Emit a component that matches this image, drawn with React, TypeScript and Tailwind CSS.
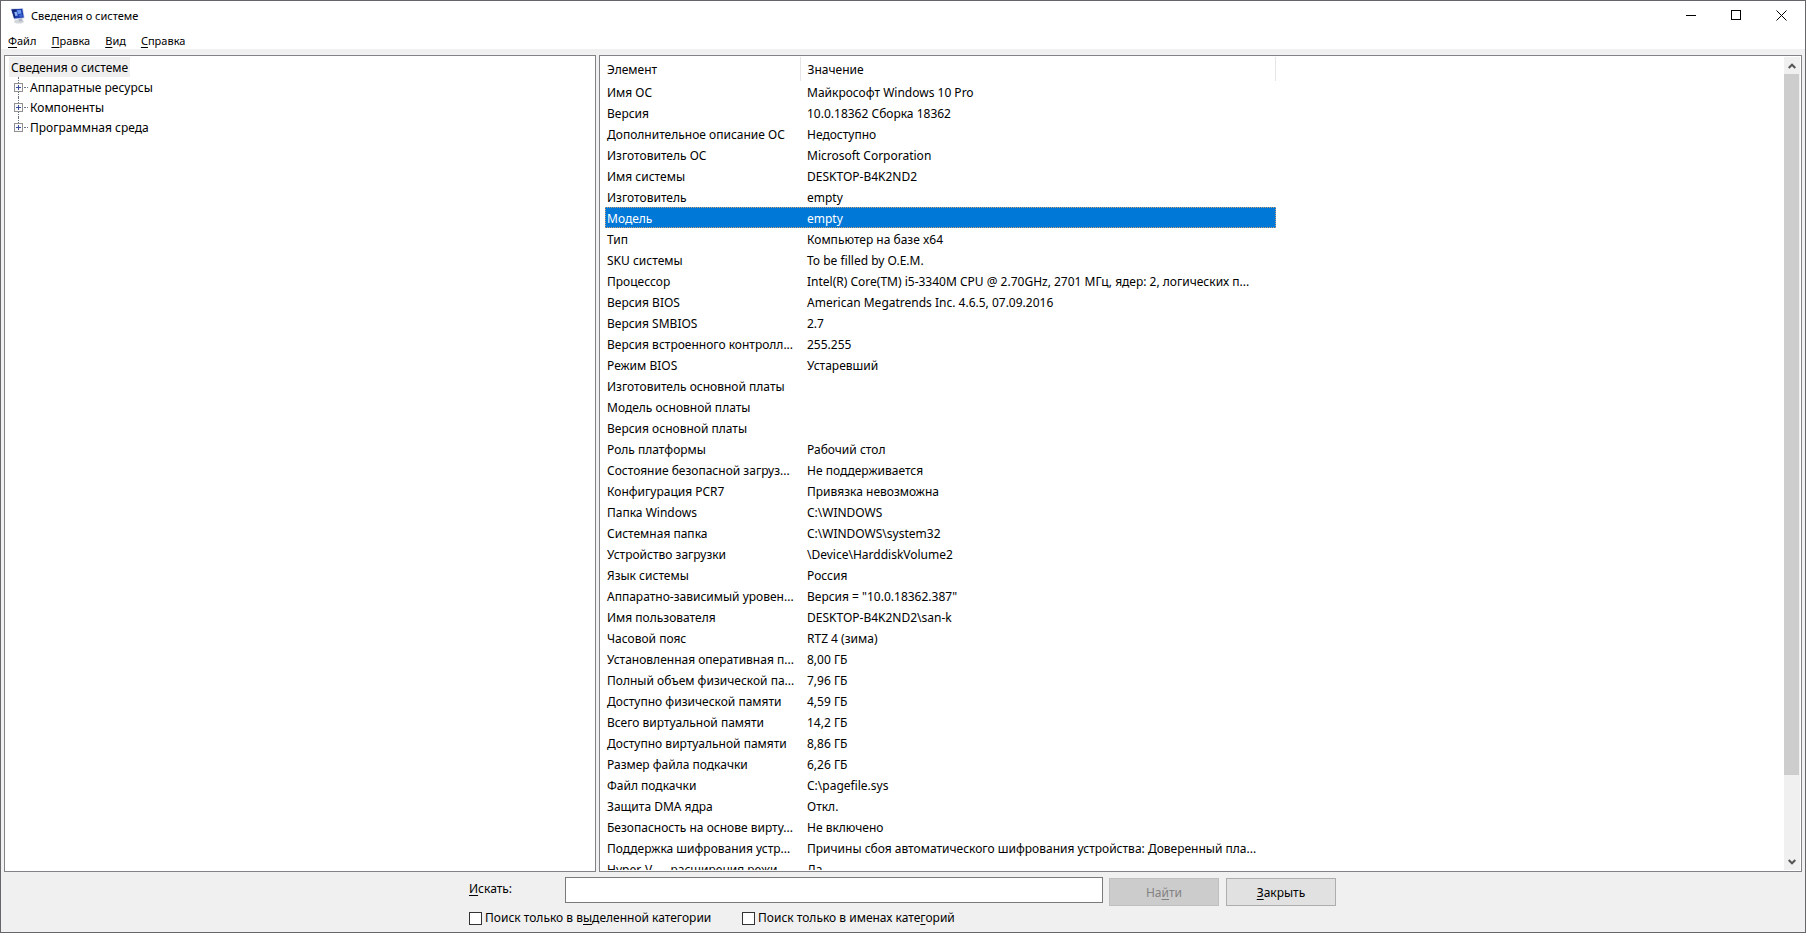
import { ReactNode } from "react";

type TRow = {
  name: string;
  value: string;
};

const menuItems = [
  { hot: "Ф", rest: "айл" },
  { hot: "П", rest: "равка" },
  { hot: "В", rest: "ид" },
  { hot: "С", rest: "правка" },
];

const treeItems = ["Аппаратные ресурсы", "Компоненты", "Программная среда"];

const rows: TRow[] = [
  { name: "Имя ОС", value: "Майкрософт Windows 10 Pro" },
  { name: "Версия", value: "10.0.18362 Сборка 18362" },
  { name: "Дополнительное описание ОС", value: "Недоступно" },
  { name: "Изготовитель ОС", value: "Microsoft Corporation" },
  { name: "Имя системы", value: "DESKTOP-B4K2ND2" },
  { name: "Изготовитель", value: "empty" },
  { name: "Модель", value: "empty" },
  { name: "Тип", value: "Компьютер на базе x64" },
  { name: "SKU системы", value: "To be filled by O.E.M." },
  {
    name: "Процессор",
    value:
      "Intel(R) Core(TM) i5-3340M CPU @ 2.70GHz, 2701 МГц, ядер: 2, логических п...",
  },
  { name: "Версия BIOS", value: "American Megatrends Inc. 4.6.5, 07.09.2016" },
  { name: "Версия SMBIOS", value: "2.7" },
  { name: "Версия встроенного контролл...", value: "255.255" },
  { name: "Режим BIOS", value: "Устаревший" },
  { name: "Изготовитель основной платы", value: "" },
  { name: "Модель основной платы", value: "" },
  { name: "Версия основной платы", value: "" },
  { name: "Роль платформы", value: "Рабочий стол" },
  { name: "Состояние безопасной загруз...", value: "Не поддерживается" },
  { name: "Конфигурация PCR7", value: "Привязка невозможна" },
  { name: "Папка Windows", value: "C:\\WINDOWS" },
  { name: "Системная папка", value: "C:\\WINDOWS\\system32" },
  { name: "Устройство загрузки", value: "\\Device\\HarddiskVolume2" },
  { name: "Язык системы", value: "Россия" },
  { name: "Аппаратно-зависимый уровен...", value: 'Версия = "10.0.18362.387"' },
  { name: "Имя пользователя", value: "DESKTOP-B4K2ND2\\san-k" },
  { name: "Часовой пояс", value: "RTZ 4 (зима)" },
  { name: "Установленная оперативная п...", value: "8,00 ГБ" },
  { name: "Полный объем физической па...", value: "7,96 ГБ" },
  { name: "Доступно физической памяти", value: "4,59 ГБ" },
  { name: "Всего виртуальной памяти", value: "14,2 ГБ" },
  { name: "Доступно виртуальной памяти", value: "8,86 ГБ" },
  { name: "Размер файла подкачки", value: "6,26 ГБ" },
  { name: "Файл подкачки", value: "C:\\pagefile.sys" },
  { name: "Защита DMA ядра", value: "Откл." },
  { name: "Безопасность на основе вирту...", value: "Не включено" },
  {
    name: "Поддержка шифрования устр...",
    value:
      "Причины сбоя автоматического шифрования устройства: Доверенный пла...",
  },
  { name: "Hyper-V — расширения режи...", value: "Да" },
];

const selectedRow = 6;

const AppIcon = () => (
  <svg width="16" height="16" viewBox="0 0 16 16" aria-hidden="true">
    <ellipse cx="9" cy="13.6" rx="4.8" ry="2" fill="#d3d6da" />
    <path d="M8 10l4-1 .6 4-3.4.8z" fill="#b3b8c2" />
    <path d="M.6.8L13 .2l1.6 10-10.6 1.4z" fill="#c3cbe6" />
    <path d="M1.4 1.4L12.3.8l1.5 8.6-9.3 1.2z" fill="#1f3fae" />
    <path d="M1.6 1.6l5-.4L5 10.1l-1 .2z" fill="#12267a" />
    <path d="M7 2.2l3.8-.2.7 3.4-3.6.6z" fill="#6f9bf0" />
    <path d="M4.2 4l2.4-.3 1.2 3.8-2.5.5z" fill="#8fb2f5" />
    <path d="M9 6.8l3.2-.6.5 2.2-3.2.4z" fill="#3c67d8" />
  </svg>
);

const CaptionButton = ({
  label,
  children,
}: {
  label: string;
  children: ReactNode;
}) => (
  <button
    aria-label={label}
    className="w-[45px] h-7 flex items-center justify-center hover:bg-gray-200"
  >
    <svg
      width="11"
      height="11"
      viewBox="0 0 11 11"
      fill="none"
      stroke="#000"
      shapeRendering="crispEdges"
    >
      {children}
    </svg>
  </button>
);

const TitleBar = () => (
  <header className="h-[30px] shrink-0 flex items-start bg-white pl-[9px] pr-px">
    <div className="flex-1 h-[30px] flex items-center gap-[5px]">
      <AppIcon />
      <h1 className="text-[11px] leading-4">Сведения о системе</h1>
    </div>
    <CaptionButton label="Свернуть">
      <path d="M0 5.5h10" />
    </CaptionButton>
    <CaptionButton label="Развернуть">
      <path d="M.5.5h9v9h-9z" />
    </CaptionButton>
    <CaptionButton label="Закрыть окно">
      <path d="M.5.5l10 10M10.5.5l-10 10" shapeRendering="auto" />
    </CaptionButton>
  </header>
);

const MenuBar = () => (
  <nav className="h-[18px] shrink-0 flex items-end gap-[15px] bg-white pl-[7px] text-[11px]">
    {menuItems.map((item) => (
      <button key={item.hot} className="leading-4 hover:bg-sky-100">
        <span className="underline underline-offset-2">{item.hot}</span>
        {item.rest}
      </button>
    ))}
  </nav>
);

const Tree = () => (
  <aside className="w-[592px] shrink-0 bg-white border border-[#828287] pl-[4px] pt-px">
    <div className="w-fit h-5 px-[2px] pt-[2px] leading-[18px] bg-[#efefef]">
      Сведения о системе
    </div>
    <ul>
      {treeItems.map((item) => (
        <li key={item} className="flex items-center h-5 pl-[5px]">
          <div className="flex flex-col items-center h-5">
            <span className="flex-1 border-l border-dotted border-gray-500" />
            <button aria-label={item} className="block">
              <svg
                width="9"
                height="9"
                viewBox="0 0 9 9"
                fill="#fafafa"
                shapeRendering="crispEdges"
                className="block"
              >
                <path d="M.5.5h8v8h-8z" stroke="#919191" />
                <path d="M2 4.5h5M4.5 2v5" stroke="#3b4f9a" />
              </svg>
            </button>
            <span
              className={
                item === treeItems[treeItems.length - 1]
                  ? "flex-1"
                  : "flex-1 border-l border-dotted border-gray-500"
              }
            />
          </div>
          <span className="w-[4px] ml-px border-t border-dotted border-gray-500" />
          <span className="pl-[2px] pt-[2px] leading-[18px]">{item}</span>
        </li>
      ))}
    </ul>
  </aside>
);

const ScrollBar = () => (
  <div className="w-4 shrink-0 flex flex-col my-px mr-px bg-[#f0f0f0]">
    <button
      aria-label="Вверх"
      className="h-[17px] flex items-center justify-center"
    >
      <svg width="8" height="6" viewBox="0 0 8 6" fill="none">
        <path d="M.7 5L4 1.7 7.3 5" stroke="#555" strokeWidth="2" />
      </svg>
    </button>
    <div className="flex-1">
      <div className="h-[90%] w-[15px] bg-[#cdcdcd]" />
    </div>
    <button
      aria-label="Вниз"
      className="h-[17px] flex items-center justify-center"
    >
      <svg width="8" height="6" viewBox="0 0 8 6" fill="none">
        <path d="M.7 1L4 4.3 7.3 1" stroke="#555" strokeWidth="2" />
      </svg>
    </button>
  </div>
);

const Details = () => (
  <main className="flex-1 min-w-0 flex bg-white border border-[#828287]">
    <div className="flex-1 min-w-0 overflow-hidden pl-[5px] pt-px mb-px">
      <table className="w-[671px] table-fixed border-collapse text-left whitespace-nowrap">
        <thead>
          <tr className="h-6">
            <th className="w-[195px] p-0 pl-[2px] pt-[2px] font-normal border-r border-[#e5e5e5]">
              Элемент
            </th>
            <th className="p-0 pl-[7px] pt-[2px] font-normal border-r border-[#e5e5e5]">
              Значение
            </th>
          </tr>
        </thead>
        <tbody>
          {rows.map((row, index) => (
            <tr
              key={row.name}
              className={
                index === selectedRow
                  ? "h-[21px] bg-[#0078d7] text-white outline-1 -outline-offset-1 outline-dotted outline-[#c8a078]"
                  : "h-[21px]"
              }
            >
              <td className="p-0 pl-[2px] pt-[3px] leading-[18px] overflow-hidden">
                {row.name}
              </td>
              <td className="p-0 pl-[7px] pt-[3px] leading-[18px] overflow-hidden">
                {row.value}
              </td>
            </tr>
          ))}
        </tbody>
      </table>
    </div>
    <ScrollBar />
  </main>
);

const SearchPanel = () => (
  <form
    className="shrink-0 w-full max-w-[868px] mx-auto h-[60px] pt-[5px]"
    onSubmit={(e) => e.preventDefault()}
  >
    <div className="flex items-start">
      <label htmlFor="search" className="w-24 pt-1 leading-4">
        <span className="underline underline-offset-2">И</span>скать:
      </label>
      <input
        type="text"
        id="search"
        className="flex-1 h-[26px] px-1 bg-white border border-[#7a7a7a] outline-none"
      />
      <button
        type="submit"
        disabled
        className="w-[110px] h-7 mt-px ml-[6px] pt-px bg-[#cccccc] border border-[#bfbfbf] text-[#838383]"
      >
        На<span className="underline underline-offset-2">й</span>ти
      </button>
      <button
        type="button"
        className="w-[110px] h-7 mt-px ml-[7px] mr-px pt-px bg-[#e1e1e1] border border-[#adadad]"
      >
        <span className="underline underline-offset-2">З</span>акрыть
      </button>
    </div>
    <div className="flex pt-1">
      <label className="w-[273px] flex items-center gap-[3px] leading-4">
        <input
          type="checkbox"
          className="appearance-none size-[13px] bg-white border border-[#333] checked:bg-[#333]"
        />
        <span>
          Поиск только в в
          <span className="underline underline-offset-2">ы</span>деленной
          категории
        </span>
      </label>
      <label className="flex items-center gap-[3px] leading-4">
        <input
          type="checkbox"
          className="appearance-none size-[13px] bg-white border border-[#333] checked:bg-[#333]"
        />
        <span>
          Поиск только в именах кате
          <span className="underline underline-offset-2">г</span>орий
        </span>
      </label>
    </div>
  </form>
);

const App = () => {
  return (
    <div className="h-screen flex flex-col overflow-hidden bg-[#f0f0f0] border border-[#66666a] font-['Noto_Sans',sans-serif] text-[12px] text-black">
      <TitleBar />
      <MenuBar />
      <div className="flex-1 min-h-0 flex gap-[3px] px-[3px] pt-[6px]">
        <Tree />
        <Details />
      </div>
      <SearchPanel />
    </div>
  );
};

export default App;
